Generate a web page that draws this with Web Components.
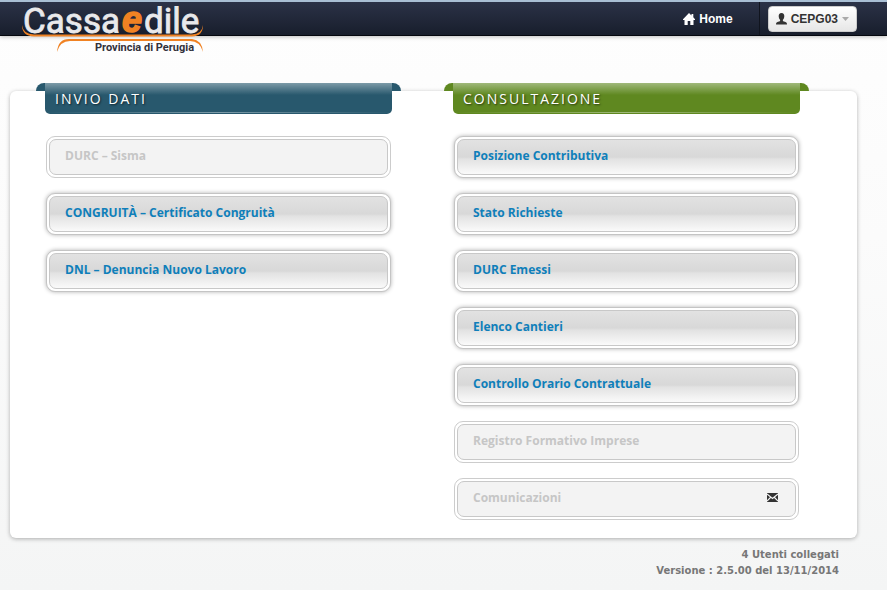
<!DOCTYPE html>
<html lang="it">
<head>
<meta charset="utf-8">
<meta name="viewport" content="width=device-width, initial-scale=1">
<title>Cassa Edile - Provincia di Perugia</title>
<style>
  body {
    margin: 0;
    min-height: 100vh;
    background: linear-gradient(#fefefe, #fbfbfb 40%, #f4f5f5);
    font-family: "Liberation Sans", Arial, sans-serif;
    font-size: 12px;
    color: #777;
  }
</style>
</head>
<body>
<cassa-testata>
  <cassa-logo></cassa-logo>
  <cassa-home slot="azioni">Home</cassa-home>
  <cassa-utente slot="azioni">CEPG03</cassa-utente>
</cassa-testata>

<cassa-pannello>
  <cassa-sezione titolo="INVIO DATI" style="--nastro: #28586d; --nastro-luce: #7d9ba8">
    <cassa-voce disattivata>DURC – Sisma</cassa-voce>
    <cassa-voce>CONGRUITÀ – Certificato Congruità</cassa-voce>
    <cassa-voce>DNL – Denuncia Nuovo Lavoro</cassa-voce>
  </cassa-sezione>
  <cassa-sezione titolo="CONSULTAZIONE" style="--nastro: #5f8820; --nastro-luce: #a0b97b">
    <cassa-voce>Posizione Contributiva</cassa-voce>
    <cassa-voce>Stato Richieste</cassa-voce>
    <cassa-voce>DURC Emessi</cassa-voce>
    <cassa-voce>Elenco Cantieri</cassa-voce>
    <cassa-voce>Controllo Orario Contrattuale</cassa-voce>
    <cassa-voce disattivata>Registro Formativo Imprese</cassa-voce>
    <cassa-voce disattivata>Comunicazioni
      <svg slot="icona" width="11" height="9" viewBox="0 0 11 9" aria-hidden="true">
        <path fill="#333" d="M0 0h11v9H0z"/>
        <path fill="none" stroke="#f3f3f3" stroke-width="1.1" d="M0 1l5.500 4.500L11 1M0 8l3.500-3.500M11 8L7.500 4.500"/>
      </svg>
    </cassa-voce>
  </cassa-sezione>
</cassa-pannello>

<cassa-piede>
  <div>4 Utenti collegati</div>
  <div>Versione : 2.5.00 del 13/11/2014</div>
</cassa-piede>

<script>
class CassaTestata extends HTMLElement {
  connectedCallback() {
    if (this.shadowRoot) return;
    this.attachShadow({ mode: 'open' }).innerHTML = `
      <style>
        :host {
          display: block;
        }
        header {
          display: flex;
          justify-content: space-between;
          align-items: flex-start;
          box-sizing: border-box;
          height: 36px;
          padding: 0 30px 0 21px;
          border-top: 2px solid #a9bfd4;
          border-bottom: 1px solid #05080f;
          background: linear-gradient(#2b3247, #181e2c);
          box-shadow: 0 1px 4px rgba(0, 0, 0, 0.25);
        }
        nav {
          display: flex;
          align-items: center;
          height: 100%;
        }
      </style>
      <header>
        <slot></slot>
        <nav><slot name="azioni"></slot></nav>
      </header>
    `;
  }
}

class CassaLogo extends HTMLElement {
  connectedCallback() {
    if (this.shadowRoot) return;
    this.attachShadow({ mode: 'open' }).innerHTML = `
      <style>
        :host {
          display: block;
        }
        svg {
          display: block;
          overflow: visible;
        }
        .nome {
          font: 35px Roboto, "Liberation Sans", sans-serif;
          fill: #e9e9eb;
          stroke: #e9e9eb;
          stroke-width: 0.8;
        }
        .e {
          font: italic bold 36px "Liberation Sans", Arial, sans-serif;
          fill: #f08223;
          stroke: #f08223;
          stroke-width: 1.5;
        }
        .provincia {
          font: bold 11px Roboto, "Liberation Sans", sans-serif;
          fill: #33313a;
        }
      </style>
      <svg width="186" height="54" viewBox="21 2 186 54" role="img" aria-label="Cassa Edile Provincia di Perugia">
        <path fill="#f08223" d="M22 25Q23 34 34 34.500H192Q202 34 203 25Q203 36 192 36.500H34Q22 36 22 25z"/>
        <path fill="#f08223" d="M57 52Q58 39 69 39H192Q202 40 203 52Q200 41 190 41H70Q60 41 57 52z"/>
        <text class="nome" x="23" y="33">Cassa</text>
        <text class="e" x="122" y="32">e</text>
        <text class="nome" x="144" y="33">dile</text>
        <text class="provincia" x="95" y="51">Provincia di Perugia</text>
      </svg>
    `;
  }
}

class CassaHome extends HTMLElement {
  connectedCallback() {
    if (this.shadowRoot) return;
    this.attachShadow({ mode: 'open' }).innerHTML = `
      <style>
        :host {
          display: flex;
          align-items: center;
          height: 100%;
          margin-right: 8px;
          padding-right: 26px;
          border-right: 1px solid #10141e;
        }
        a {
          display: flex;
          align-items: center;
          gap: 4px;
          color: #fff;
          font-weight: bold;
          text-decoration: none;
        }
      </style>
      <a href="#">
        <svg width="12" height="12" viewBox="0 0 12 12" aria-hidden="true">
          <path fill="#fff" d="M6 0L8.500 2.500V1H10.300V4.300L12 6.300V7H10.500V12H7.300V8H4.700V12H1.500V7H0V6.300z"/>
        </svg>
        <slot></slot>
      </a>
    `;
  }
}

class CassaUtente extends HTMLElement {
  connectedCallback() {
    if (this.shadowRoot) return;
    this.attachShadow({ mode: 'open' }).innerHTML = `
      <style>
        :host {
          display: block;
        }
        button {
          display: flex;
          align-items: center;
          gap: 4px;
          height: 26px;
          padding: 0 7px;
          border: 1px solid #ccc;
          border-radius: 4px;
          background: linear-gradient(#fff, #e6e6e6);
          color: #333;
          font: bold 12px "Liberation Sans", Arial, sans-serif;
          cursor: pointer;
        }
      </style>
      <button type="button" aria-haspopup="menu">
        <svg width="11" height="12" viewBox="0 0 11 12" aria-hidden="true">
          <path fill="#333" d="M5.500 0C7.500 0 8.400 1.300 8.300 3.200C8.200 5 7.600 6 6.900 6.700V8C8 8.600 10 9 10.600 9.700Q11 10.300 11 11.500H0Q0 10.300.4 9.700C1 9 3 8.600 4.100 8V6.700C3.400 6 2.800 5 2.700 3.200C2.600 1.300 3.500 0 5.500 0z"/>
        </svg>
        <slot></slot>
        <svg width="7" height="4" viewBox="0 0 7 4" aria-hidden="true"><path fill="#aaa" d="M0 0h7L3.500 4z"/></svg>
      </button>
    `;
  }
}

class CassaPannello extends HTMLElement {
  connectedCallback() {
    if (this.shadowRoot) return;
    this.attachShadow({ mode: 'open' }).innerHTML = `
      <style>
        :host {
          display: block;
        }
        main {
          display: grid;
          grid-template-columns: 1fr 1fr;
          gap: 61px;
          margin: 55px 30px 0 10px;
          padding: 0 57px 18px 35px;
          border-radius: 6px;
          background: #fff;
          box-shadow: 0 1px 4px rgba(0, 0, 0, 0.3);
        }
      </style>
      <main><slot></slot></main>
    `;
  }
}

class CassaSezione extends HTMLElement {
  connectedCallback() {
    if (this.shadowRoot) return;
    this.attachShadow({ mode: 'open' }).innerHTML = `
      <style>
        :host {
          display: block;
        }
        /* il nastro sporge dal bordo alto del pannello */
        h2 {
          position: relative;
          box-sizing: border-box;
          height: 31px;
          margin: -8px 0 22px;
          padding: 0 10px;
          border-radius: 0 0 5px 5px;
          background:
            linear-gradient(90deg, transparent, var(--nastro-luce), transparent) 0 29px / 100% 1px no-repeat,
            linear-gradient(var(--nastro-luce), var(--nastro) 12px);
          color: #fff;
          font: 14px/32px "Open Sans", "Noto Sans", sans-serif;
          letter-spacing: 2px;
          text-shadow: 1px 1px 2px rgba(0, 0, 0, 0.6);
        }
        h2::before,
        h2::after {
          content: "";
          position: absolute;
          top: 0;
          width: 9px;
          height: 8px;
          background: var(--nastro);
        }
        h2::before {
          right: 100%;
          border-radius: 9px 0 0 0;
        }
        h2::after {
          left: 100%;
          border-radius: 0 9px 0 0;
        }
        .voci {
          display: grid;
          gap: 15px;
          padding: 0 1px;
        }
      </style>
      <h2></h2>
      <div class="voci"><slot></slot></div>
    `;
    this.shadowRoot.querySelector('h2').textContent = this.getAttribute('titolo');
  }
}

class CassaVoce extends HTMLElement {
  connectedCallback() {
    if (this.shadowRoot) return;
    const disattivata = this.hasAttribute('disattivata') ? 'disabled' : '';
    this.attachShadow({ mode: 'open' }).innerHTML = `
      <style>
        :host {
          display: block;
        }
        button {
          display: block;
          width: 100%;
          height: 42px;
          padding: 2px;
          border: 1px solid #c4c4c4;
          border-radius: 9px;
          background: #fff;
          box-shadow: 0 0 4px rgba(0, 0, 0, 0.3);
          color: #0f7fba;
          font: bold 12px "Open Sans", "Noto Sans", sans-serif;
          text-align: left;
          cursor: pointer;
        }
        .interno {
          display: flex;
          align-items: center;
          justify-content: space-between;
          box-sizing: border-box;
          height: 100%;
          padding: 0 17px 3px 15px;
          border: 1px solid #c8c8c8;
          border-radius: 7px;
          background: linear-gradient(#e2e2e2, #d8d8d8 50%, #e2e2e2 56%, #fafafa);
        }
        button:disabled {
          border-color: #ccc;
          box-shadow: none;
          color: #c6c6c6;
          cursor: default;
        }
        button:disabled .interno {
          background: #f3f3f3;
        }
      </style>
      <button type="button" ${disattivata}>
        <span class="interno"><span><slot></slot></span><slot name="icona"></slot></span>
      </button>
    `;
  }
}

class CassaPiede extends HTMLElement {
  connectedCallback() {
    if (this.shadowRoot) return;
    this.attachShadow({ mode: 'open' }).innerHTML = `
      <style>
        :host {
          display: block;
        }
        footer {
          padding: 9px 48px 10px;
          font: bold 10px/16px "DejaVu Sans", Verdana, sans-serif;
          text-align: right;
        }
      </style>
      <footer><slot></slot></footer>
    `;
  }
}

customElements.define('cassa-testata', CassaTestata);
customElements.define('cassa-logo', CassaLogo);
customElements.define('cassa-home', CassaHome);
customElements.define('cassa-utente', CassaUtente);
customElements.define('cassa-pannello', CassaPannello);
customElements.define('cassa-sezione', CassaSezione);
customElements.define('cassa-voce', CassaVoce);
customElements.define('cassa-piede', CassaPiede);
</script>
</body>
</html>
